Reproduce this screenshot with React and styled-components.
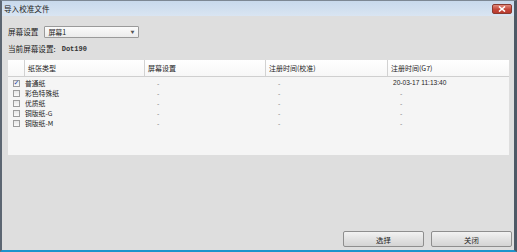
import React from 'react'
import styled, { createGlobalStyle } from 'styled-components';

const GlobalStyle = createGlobalStyle`
    html, body {
        margin: 0;
        padding: 0;
        background: #dedede;
    }
    body {
        font-family: "Noto Sans CJK SC", "DejaVu Sans", sans-serif;
        color: #1a1a1a;
    }
`;

const rows = [
    {name: '普通纸', checked: true, screen: '-', calib: '-', g7: '20-03-17 11:13:40'},
    {name: '彩色特殊纸', checked: false, screen: '-', calib: '-', g7: '-'},
    {name: '优质纸', checked: false, screen: '-', calib: '-', g7: '-'},
    {name: '铜版纸-G', checked: false, screen: '-', calib: '-', g7: '-'},
    {name: '铜版纸-M', checked: false, screen: '-', calib: '-', g7: '-'},
];

function App() {
    return (
        <>
            <GlobalStyle />
            <Window>
                <TitleBar>
                    <Title>导入校准文件</Title>
                    <CloseButton>
                        <svg width="8" height="6" viewBox="0 0 8 6">
                            <path d="M1 0.5 L7 5.5 M7 0.5 L1 5.5" stroke="#fff" strokeWidth="1.6" />
                        </svg>
                    </CloseButton>
                </TitleBar>
                <Body>
                    <FieldRow>
                        <Label>屏幕设置</Label>
                        <Select>
                            <span>屏幕1</span>
                            <Arrow>▼</Arrow>
                        </Select>
                    </FieldRow>
                    <InfoRow>
                        <Label>当前屏幕设置:</Label>
                        <Mono>Dot190</Mono>
                    </InfoRow>
                    <Table>
                        <HeaderRow>
                            <HeadCell />
                            <HeadCell $line>纸张类型</HeadCell>
                            <HeadCell $line>屏幕设置</HeadCell>
                            <HeadCell $line>注册时间(校准)</HeadCell>
                            <HeadCell $line>注册时间(G7)</HeadCell>
                        </HeaderRow>
                        <RowList>
                            {rows.map((row) => (
                                <Row key={row.name}>
                                    <CheckCell>
                                        <Check $checked={row.checked}>{row.checked ? '✓' : ''}</Check>
                                    </CheckCell>
                                    <Cell>{row.name}</Cell>
                                    <DashCell>{row.screen}</DashCell>
                                    <DashCell>{row.calib}</DashCell>
                                    {row.g7 === '-'
                                        ? <DashCell>{row.g7}</DashCell>
                                        : <DateCell>{row.g7}</DateCell>}
                                </Row>
                            ))}
                        </RowList>
                    </Table>
                    <Footer>
                        <Button>选择</Button>
                        <Button>关闭</Button>
                    </Footer>
                </Body>
            </Window>
        </>
    )
}

const Window = styled.div`
    width: 517px;
    height: 252px;
    box-sizing: border-box;
    display: flex;
    flex-direction: column;
    border-left: 2px solid #5c6672;
    border-right: 3px solid #4d5966;
    border-bottom: 2px solid #1e94cc;
    border-top: 1px solid #7d8894;
    background: #dedede;
    overflow: hidden;
`;

const TitleBar = styled.div`
    height: 15px;
    flex: none;
    display: flex;
    align-items: center;
    justify-content: space-between;
    padding: 0 2px 0 2px;
    background: linear-gradient(#c8d9ec, #d9e5f2);
`;

const Title = styled.div`
    font-size: 7.6px;
    color: #222;
    line-height: 1;
`;

const CloseButton = styled.div`
    width: 20px;
    height: 10px;
    box-sizing: border-box;
    border: 1px solid #8a3a30;
    border-radius: 2px;
    background: linear-gradient(#e28a7c, #c4473a 55%, #b93a2e);
    display: flex;
    align-items: center;
    justify-content: center;
    margin-top: 1px;
`;

const Body = styled.div`
    flex: 1;
    display: flex;
    flex-direction: column;
    padding: 10px 2px 3px 6px;
`;

const FieldRow = styled.div`
    display: flex;
    align-items: center;
    height: 12px;
    gap: 6px;
`;

const InfoRow = styled.div`
    display: flex;
    align-items: center;
    height: 10px;
    margin-top: 6px;
    gap: 6px;
`;

const Label = styled.span`
    font-size: 7.6px;
    line-height: 1;
    color: #1c1c1c;
`;

const Select = styled.div`
    width: 95px;
    height: 12px;
    box-sizing: border-box;
    border: 1px solid #9a9a9a;
    border-radius: 1px;
    background: linear-gradient(#fbfbfb, #ececec);
    display: flex;
    align-items: center;
    justify-content: space-between;
    padding: 0 4px 0 3px;
    font-size: 7px;
    color: #1c1c1c;
`;

const Arrow = styled.span`
    font-size: 4px;
    color: #555;
`;

const Mono = styled.span`
    font-family: "Liberation Mono", monospace;
    font-weight: bold;
    font-size: 7px;
    color: #333;
`;

const Table = styled.div`
    margin-top: 6px;
    width: 501px;
    height: 95px;
    background: #f5f5f5;
    display: flex;
    flex-direction: column;
`;

const grid = `
    display: grid;
    grid-template-columns: 16px 120px 121px 122px 1fr;
`;

const HeaderRow = styled.div`
    ${grid}
    height: 17px;
    box-sizing: border-box;
    background: linear-gradient(#ffffff, #f7f7f7);
    border-bottom: 1px solid #cfcfcf;
`;

const HeadCell = styled.div`
    display: flex;
    align-items: center;
    padding-left: 3px;
    font-size: 7px;
    color: #1c1c1c;
    border-left: ${p => p.$line ? '1px solid #d2d2d2' : 'none'};
`;

const RowList = styled.div`
    padding-top: 1px;
`;

const Row = styled.div`
    ${grid}
    height: 10px;
    align-items: center;
`;

const CheckCell = styled.div`
    display: flex;
    justify-content: center;
`;

const Check = styled.div`
    width: 7px;
    height: 7px;
    box-sizing: border-box;
    border: 1px solid #9c9c9c;
    background: linear-gradient(#e6e6e6, #fafafa);
    color: #2c4fb0;
    font-size: 7px;
    line-height: 5px;
    text-align: center;
    font-family: "DejaVu Sans", sans-serif;
`;

const Cell = styled.div`
    font-size: 6.8px;
    line-height: 1;
    color: #1c1c1c;
    padding-left: 1px;
`;

const DashCell = styled.div`
    font-size: 7px;
    line-height: 1;
    color: #8a8a8a;
    padding-left: 13px;
    font-family: "Liberation Sans", sans-serif;
`;

const DateCell = styled.div`
    font-size: 6.6px;
    line-height: 1;
    color: #1c1c1c;
    padding-left: 6px;
    font-family: "Liberation Sans", sans-serif;
`;

const Footer = styled.div`
    margin-top: auto;
    display: flex;
    justify-content: flex-end;
    gap: 7px;
`;

const Button = styled.div`
    width: 81px;
    height: 16px;
    box-sizing: border-box;
    border: 1px solid #8e8e8e;
    border-radius: 2px;
    background: linear-gradient(#f2f2f2, #e2e2e2 50%, #d4d4d4);
    display: flex;
    align-items: center;
    justify-content: center;
    font-size: 7.4px;
    color: #1c1c1c;
`;

export default App
